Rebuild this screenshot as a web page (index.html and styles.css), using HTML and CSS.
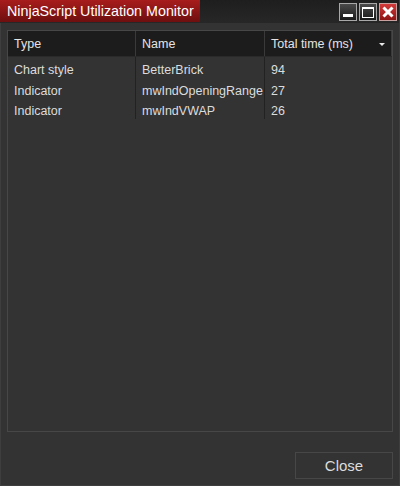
FILE: index.html
```html
<!DOCTYPE html>
<html lang="en">
<head>
    <meta charset="UTF-8">
    <title>NinjaScript Utilization Monitor</title>
    <link rel="stylesheet" href="styles.css">
</head>
<body>
    <div class="window">
        <div class="title-bar">
            <div class="title-tab">NinjaScript Utilization Monitor</div>
            <div class="window-buttons">
                <span class="win-btn minimize"><span class="glyph-min"></span></span>
                <span class="win-btn maximize"><span class="glyph-max"></span></span>
                <span class="win-btn close">
                    <svg width="12" height="12" viewBox="0 0 12 12">
                        <path d="M1.5 1.5 L10.5 10.5 M10.5 1.5 L1.5 10.5" stroke="#fff" stroke-width="3"/>
                    </svg>
                </span>
            </div>
        </div>

        <div class="content">
            <div class="grid">
                <div class="grid-row header">
                    <div class="cell col-type">Type</div>
                    <div class="cell col-name">Name</div>
                    <div class="cell col-time">Total time (ms)<span class="sort-arrow"></span></div>
                </div>
                <div class="grid-row">
                    <div class="cell col-type">Chart style</div>
                    <div class="cell col-name">BetterBrick</div>
                    <div class="cell col-time">94</div>
                </div>
                <div class="grid-row">
                    <div class="cell col-type">Indicator</div>
                    <div class="cell col-name">mwIndOpeningRange</div>
                    <div class="cell col-time">27</div>
                </div>
                <div class="grid-row">
                    <div class="cell col-type">Indicator</div>
                    <div class="cell col-name">mwIndVWAP</div>
                    <div class="cell col-time">26</div>
                </div>
            </div>

            <div class="footer">
                <button class="close-button">Close</button>
            </div>
        </div>
    </div>
</body>
</html>
```

FILE: styles.css
```css
* {
    margin: 0;
    padding: 0;
    box-sizing: border-box;
}

body {
    font-family: "Liberation Sans", Arial, sans-serif;
    background: #333333;
    width: 400px;
    height: 486px;
    overflow: hidden;
}

.window {
    width: 400px;
    height: 486px;
    display: flex;
    flex-direction: column;
    background: #333333;
    border-left: 1px solid #3e3e3e;
    border-right: 1px solid #3e3e3e;
    border-bottom: 1px solid #3e3e3e;
}

/* title bar */
.title-bar {
    height: 23px;
    display: flex;
    justify-content: space-between;
    background: linear-gradient(#1e1e1e, #272727);
    margin-left: -1px;
}

.title-tab {
    width: 200px;
    height: 22px;
    padding-left: 7px;
    line-height: 22px;
    font-size: 14.3px;
    color: #ffffff;
    background: linear-gradient(#a81c1c, #6e0f0f);
    white-space: nowrap;
}

.window-buttons {
    display: flex;
    gap: 2px;
    padding: 3px 2px 0 0;
}

.win-btn {
    width: 18px;
    height: 18px;
    border: 1px solid #a8a8a8;
    background: linear-gradient(#4a4a4a, #1a1a1a);
    display: flex;
    align-items: center;
    justify-content: center;
    position: relative;
}

.win-btn.close {
    background: linear-gradient(#d43a3a, #8e1414);
    border-color: #c9a0a0;
}

.glyph-min {
    position: absolute;
    left: 3px;
    bottom: 3px;
    width: 10px;
    height: 3px;
    background: #ffffff;
}

.glyph-max {
    width: 12px;
    height: 11px;
    border: 1px solid #ffffff;
    border-top-width: 2px;
}

/* content */
.content {
    flex: 1;
    display: flex;
    flex-direction: column;
    padding: 7px 6px 6px 6px;
}

.grid {
    height: 402px;
    border: 1px solid #474747;
    background: #333333;
}

.grid-row {
    display: flex;
    height: 20.5px;
    font-size: 12.5px;
    color: #dcdcdc;
}

.grid-row.header {
    height: 26px;
    background: #1c1c1c;
    color: #e4e4e4;
    border-bottom: 1px solid #2a2a2a;
}

.cell {
    display: flex;
    align-items: flex-start;
    padding: 6px 0 0 6px;
    line-height: 14px;
    white-space: nowrap;
    overflow: hidden;
}

.header .cell {
    align-items: center;
    padding-top: 0;
}

.col-type {
    width: 128px;
    border-right: 1px solid #222222;
}

.col-name {
    width: 129px;
    border-right: 1px solid #222222;
}

.col-time {
    flex: 1;
    position: relative;
}

.header .col-type,
.header .col-name {
    border-right-color: #3a3a3a;
}

.header .col-time {
    border-right: 1px solid #3a3a3a;
}

.sort-arrow {
    position: absolute;
    right: 6px;
    top: 12px;
    border-left: 3px solid transparent;
    border-right: 3px solid transparent;
    border-top: 3px solid #e8e8e8;
}

/* footer */
.footer {
    flex: 1;
    display: flex;
    justify-content: flex-end;
    align-items: flex-end;
}

.close-button {
    width: 98px;
    height: 27px;
    border: 1px solid #474747;
    background: #333333;
    color: #dcdcdc;
    font-family: "Liberation Sans", Arial, sans-serif;
    font-size: 15px;
}
```
